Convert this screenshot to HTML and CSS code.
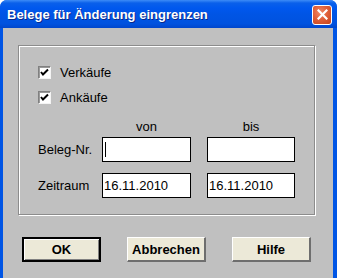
FILE: index.html
```html
<!DOCTYPE html>
<html lang="de">

<head>
    <meta charset="UTF-8" />
    <title>Belege für Änderung eingrenzen</title>
    <link rel="stylesheet" href="styles.css">
</head>

<body>
    <div class="fenster">
        <div class="titelleiste">
            <span class="titel">Belege für Änderung eingrenzen</span>
            <button class="schliessen" title="Schließen">
                <svg width="11" height="11" viewBox="0 0 11 11">
                    <path d="M1.5 1.5 L9.5 9.5 M9.5 1.5 L1.5 9.5" stroke="#fff" stroke-width="2.2" stroke-linecap="square" />
                </svg>
            </button>
        </div>

        <div class="inhalt">
            <div class="gruppe">
                <label class="check">
                    <span class="kasten">
                        <svg width="9" height="9" viewBox="0 0 9 9">
                            <path d="M1 4 L3 6.5 L8 1.5" stroke="#000" stroke-width="2" fill="none" />
                        </svg>
                    </span>
                    Verkäufe
                </label>
                <label class="check">
                    <span class="kasten">
                        <svg width="9" height="9" viewBox="0 0 9 9">
                            <path d="M1 4 L3 6.5 L8 1.5" stroke="#000" stroke-width="2" fill="none" />
                        </svg>
                    </span>
                    Ankäufe
                </label>

                <div class="raster">
                    <span></span>
                    <span class="kopf">von</span>
                    <span class="kopf">bis</span>

                    <span class="bez">Beleg-Nr.</span>
                    <div class="feld"><span class="cursor"></span></div>
                    <div class="feld"></div>

                    <span class="bez">Zeitraum</span>
                    <div class="feld">16.11.2010</div>
                    <div class="feld">16.11.2010</div>
                </div>
            </div>

            <div class="knoepfe">
                <button class="knopf standard">OK</button>
                <button class="knopf">Abbrechen</button>
                <button class="knopf">Hilfe</button>
            </div>
        </div>
    </div>
</body>

</html>
```

FILE: styles.css
```css
* {
    box-sizing: border-box;
}

body {
    margin: 0;
    font-family: 'Liberation Sans', Arial, sans-serif;
    font-size: 13px;
    color: #000;
    background: #fff;
}

.fenster {
    width: 337px;
    height: 278px;
    overflow: hidden;
    border-radius: 7px 7px 0 0;
    background: #0055e5;
}

.titelleiste {
    height: 28px;
    display: flex;
    align-items: center;
    justify-content: space-between;
    padding: 0 5px 0 7px;
    background: linear-gradient(#3d8cf7 0, #0a60ea 3px, #0058ee 8px, #0055e5 50%, #0052df 85%, #0046cc 100%);
}

.titel {
    color: #fff;
    font-weight: bold;
    font-size: 13px;
    text-shadow: 1px 1px 0 #0a2a8a;
    padding-top: 1px;
}

.schliessen {
    width: 20px;
    height: 20px;
    margin-top: 1px;
    padding: 0;
    display: flex;
    align-items: center;
    justify-content: center;
    border: 1px solid #fff;
    border-radius: 3px;
    background: radial-gradient(circle at 40% 35%, #f08a68 0, #e0603a 45%, #c4421a 100%);
}

.inhalt {
    margin: 0 4px 0 3px;
    height: 250px;
    background: #c0c0c0;
    padding: 17px 18px 0 15px;
}

.gruppe {
    height: 170px;
    border: 1px solid #8c8c8c;
    box-shadow: inset 1px 1px 0 #fff, 1px 1px 0 #fff;
    padding: 20px 0 0 19px;
}

.check {
    display: flex;
    align-items: center;
    gap: 9px;
    height: 13px;
    margin-bottom: 12px;
}

.kasten {
    width: 13px;
    height: 13px;
    display: flex;
    align-items: center;
    justify-content: center;
    background: #fff;
    border-top: 1px solid #808080;
    border-left: 1px solid #808080;
    border-right: 1px solid #f4f4f4;
    border-bottom: 1px solid #f4f4f4;
    box-shadow: inset 1px 1px 0 #9a9a9a;
}

.raster {
    display: grid;
    grid-template-columns: 48px 89px 88px;
    grid-template-rows: 15px 25px 33px;
    column-gap: 16px;
    row-gap: 3px;
    padding-top: 3px;
    align-items: end;
}

.kopf {
    text-align: center;
    line-height: 15px;
}

.bez {
    height: 25px;
    display: flex;
    align-items: center;
    white-space: nowrap;
}

.feld {
    height: 25px;
    background: #fff;
    border: 1px solid #000;
    padding: 0 1px;
    display: flex;
    align-items: center;
}

.cursor {
    width: 1px;
    height: 15px;
    background: #000;
    margin-left: 1px;
}

.knoepfe {
    display: flex;
    gap: 26px;
    margin-top: 22px;
    padding-left: 4px;
}

.knopf {
    width: 79px;
    height: 25px;
    padding: 0;
    font-family: 'Liberation Sans', Arial, sans-serif;
    font-size: 13px;
    font-weight: bold;
    color: #000;
    background: #ece9d8;
    border-top: 1px solid #fff;
    border-left: 1px solid #fff;
    border-right: 2px solid #6e6e6e;
    border-bottom: 2px solid #6e6e6e;
}

.standard {
    border: 2px solid #000;
    box-shadow: inset 1px 1px 0 #fff, inset -1px -1px 0 #808080;
}
```
